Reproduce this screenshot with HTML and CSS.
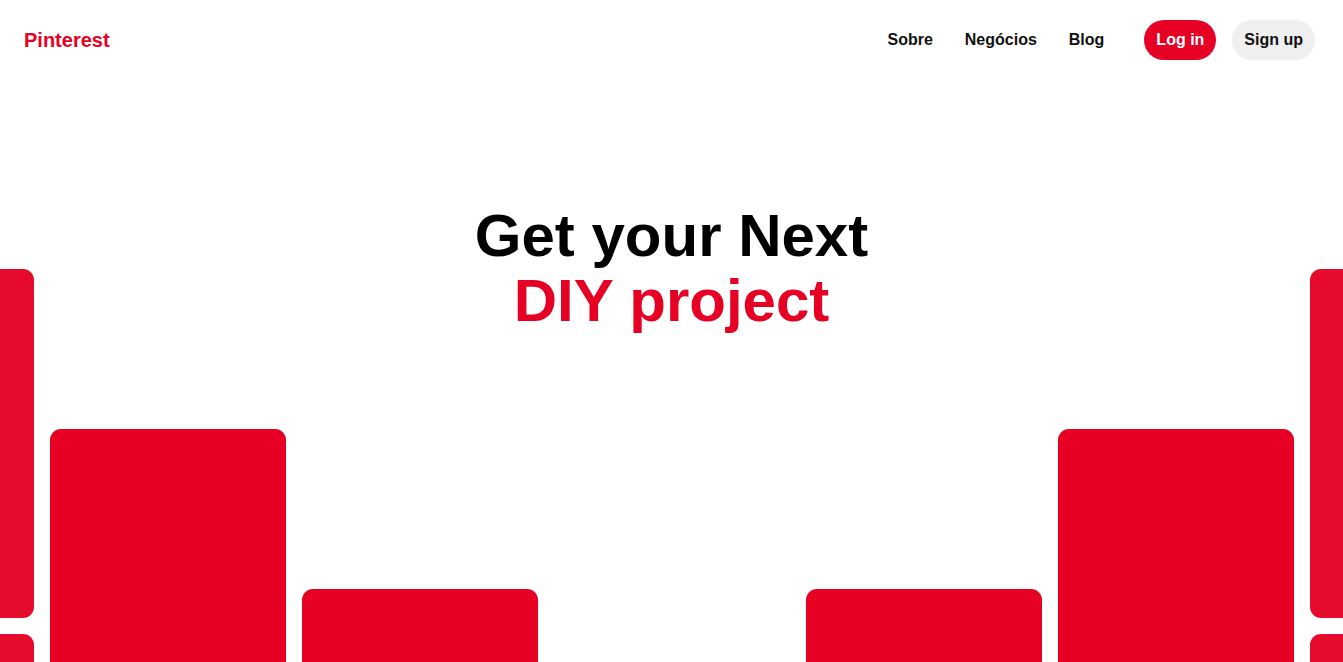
FILE: index.html
```html
<!DOCTYPE html>
<html lang="pt">
<head>
<meta charset="utf-8">
<title>Pinterest</title>
<link rel="stylesheet" href="styles.css">
</head>
<body>
<header class="topbar">
  <a class="logo" href="#">Pinterest</a>
  <nav class="nav">
    <a class="nav-link" href="#">Sobre</a>
    <a class="nav-link" href="#">Negócios</a>
    <a class="nav-link" href="#">Blog</a>
    <div class="actions">
      <a class="btn btn-login" href="#">Log in</a>
      <a class="btn btn-signup" href="#">Sign up</a>
    </div>
  </nav>
</header>
<main class="hero">
  <h1 class="headline">
    <span class="line">Get your Next</span>
    <span class="line accent">DIY project</span>
  </h1>
  <div class="masonry">
    <div class="col col-outer">
      <div class="card card-outer"></div>
      <div class="card card-outer"></div>
    </div>
    <div class="col col-second">
      <div class="card"></div>
    </div>
    <div class="col col-third">
      <div class="card"></div>
    </div>
    <div class="col col-middle">
      <div class="card"></div>
    </div>
    <div class="col col-third">
      <div class="card"></div>
    </div>
    <div class="col col-second">
      <div class="card"></div>
    </div>
    <div class="col col-outer">
      <div class="card card-outer"></div>
      <div class="card card-outer"></div>
    </div>
  </div>
</main>
</body>
</html>
```
FILE: styles.css
```css
* { box-sizing: border-box; }
html, body {
  margin: 0;
  padding: 0;
  height: 100%;
  overflow: hidden;
  background: #fff;
  font-family: "Liberation Sans", Arial, sans-serif;
}
a { text-decoration: none; }

.topbar {
  height: 80px;
  display: flex;
  align-items: center;
  justify-content: space-between;
  padding: 0 28px 0 24px;
}
.logo {
  color: #e60023;
  font-size: 20px;
  font-weight: 700;
}
.nav {
  display: flex;
  align-items: center;
}
.nav-link {
  color: #111;
  font-size: 16px;
  font-weight: 700;
  margin-right: 32px;
}
.nav-link:last-of-type { margin-right: 40px; }
.actions {
  display: flex;
  gap: 16px;
}
.btn {
  height: 40px;
  line-height: 40px;
  padding: 0 12px;
  border-radius: 20px;
  font-size: 16px;
  font-weight: 700;
}
.btn-login { background: #e60023; color: #fff; }
.btn-signup { background: #efefef; color: #111; }

.hero {
  position: relative;
  height: calc(100% - 80px);
  overflow: hidden;
}
.headline {
  position: absolute;
  top: 123px;
  left: 0;
  right: 0;
  z-index: 1;
  margin: 0;
  text-align: center;
  font-size: 60px;
  line-height: 65px;
  font-weight: 700;
  color: #000;
}
.line { display: block; }
.accent { color: #e60023; }

.masonry {
  display: flex;
  justify-content: center;
  gap: 16px;
}
.col {
  flex: 0 0 236px;
  width: 236px;
  display: flex;
  flex-direction: column;
  gap: 16px;
}
.col-outer { padding-top: 189px; }
.col-second { padding-top: 349px; }
.col-third { padding-top: 509px; }
.col-middle { padding-top: 669px; }
.card {
  height: 349px;
  border-radius: 11px;
  background: #e60023;
}
.card-outer { background: #e60a2c; }
```
